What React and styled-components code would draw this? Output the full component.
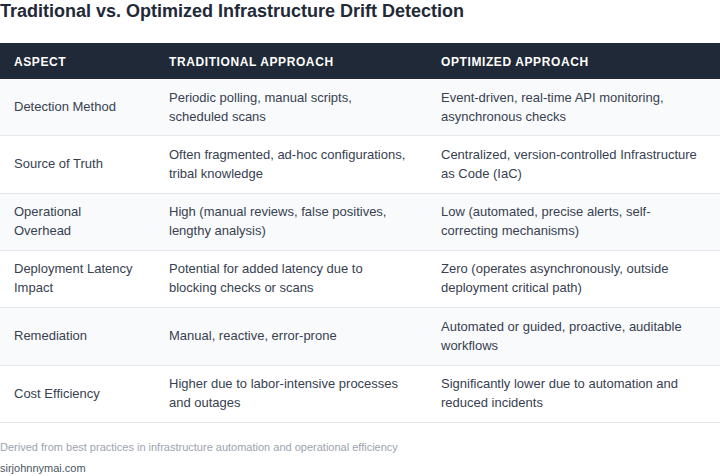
import React from "react";
import styled, { createGlobalStyle } from "styled-components";

const Global = createGlobalStyle`
  html, body { margin: 0; padding: 0; background: #ffffff; }
  body { font-family: "Liberation Sans", Arial, sans-serif; }
`;

const Page = styled.div`
  width: 720px;
`;

const Title = styled.h1`
  margin: 0 0 21px 0;
  font-size: 18px;
  line-height: 22px;
  font-weight: 700;
  color: #1f2937;
`;

const Table = styled.table`
  width: 720px;
  border-collapse: collapse;
  table-layout: fixed;
`;

const Th = styled.th`
  box-sizing: border-box;
  background: #1f2937;
  color: #ffffff;
  text-align: left;
  font-size: 12px;
  line-height: 14px;
  font-weight: 700;
  letter-spacing: 0.6px;
  text-transform: uppercase;
  padding: 12px 14px 10px 14px;
  width: ${(p) => p.$w}px;
`;

const Tr = styled.tr`
  background: ${(p) => (p.$alt ? "#f9fafb" : "#ffffff")};
  border-bottom: 1px solid #e5e7eb;
`;

const Td = styled.td`
  font-size: 13px;
  line-height: 19px;
  color: #374151;
  padding: 8.5px 14px 9.83px 14px;
  height: 38px;
  vertical-align: middle;
`;

const Footer = styled.div`
  padding-top: 18px;
  display: flex;
  flex-direction: column;
  gap: 8px;
`;

const Note = styled.div`
  font-size: 11px;
  line-height: 13px;
  color: #9ca3af;
`;

const Site = styled.div`
  font-size: 11px;
  line-height: 13px;
  color: #4b5563;
`;

const rows = [
  ["Detection Method", "Periodic polling, manual scripts, scheduled scans", "Event-driven, real-time API monitoring, asynchronous checks"],
  ["Source of Truth", "Often fragmented, ad-hoc configurations, tribal knowledge", "Centralized, version-controlled Infrastructure as Code (IaC)"],
  ["Operational Overhead", "High (manual reviews, false positives, lengthy analysis)", "Low (automated, precise alerts, self-correcting mechanisms)"],
  ["Deployment Latency Impact", "Potential for added latency due to blocking checks or scans", "Zero (operates asynchronously, outside deployment critical path)"],
  ["Remediation", "Manual, reactive, error-prone", "Automated or guided, proactive, auditable workflows"],
  ["Cost Efficiency", "Higher due to labor-intensive processes and outages", "Significantly lower due to automation and reduced incidents"],
];

export default function App() {
  return (
    <Page>
      <Global />
      <Title>Traditional vs. Optimized Infrastructure Drift Detection</Title>
      <Table>
        <thead>
          <tr>
            <Th $w={155}>Aspect</Th>
            <Th $w={272}>Traditional Approach</Th>
            <Th $w={293}>Optimized Approach</Th>
          </tr>
        </thead>
        <tbody>
          {rows.map((r, i) => (
            <Tr key={i} $alt={i % 2 === 0}>
              <Td>{r[0]}</Td>
              <Td>{r[1]}</Td>
              <Td>{r[2]}</Td>
            </Tr>
          ))}
        </tbody>
      </Table>
      <Footer>
        <Note>Derived from best practices in infrastructure automation and operational efficiency</Note>
        <Site>sirjohnnymai.com</Site>
      </Footer>
    </Page>
  );
}
